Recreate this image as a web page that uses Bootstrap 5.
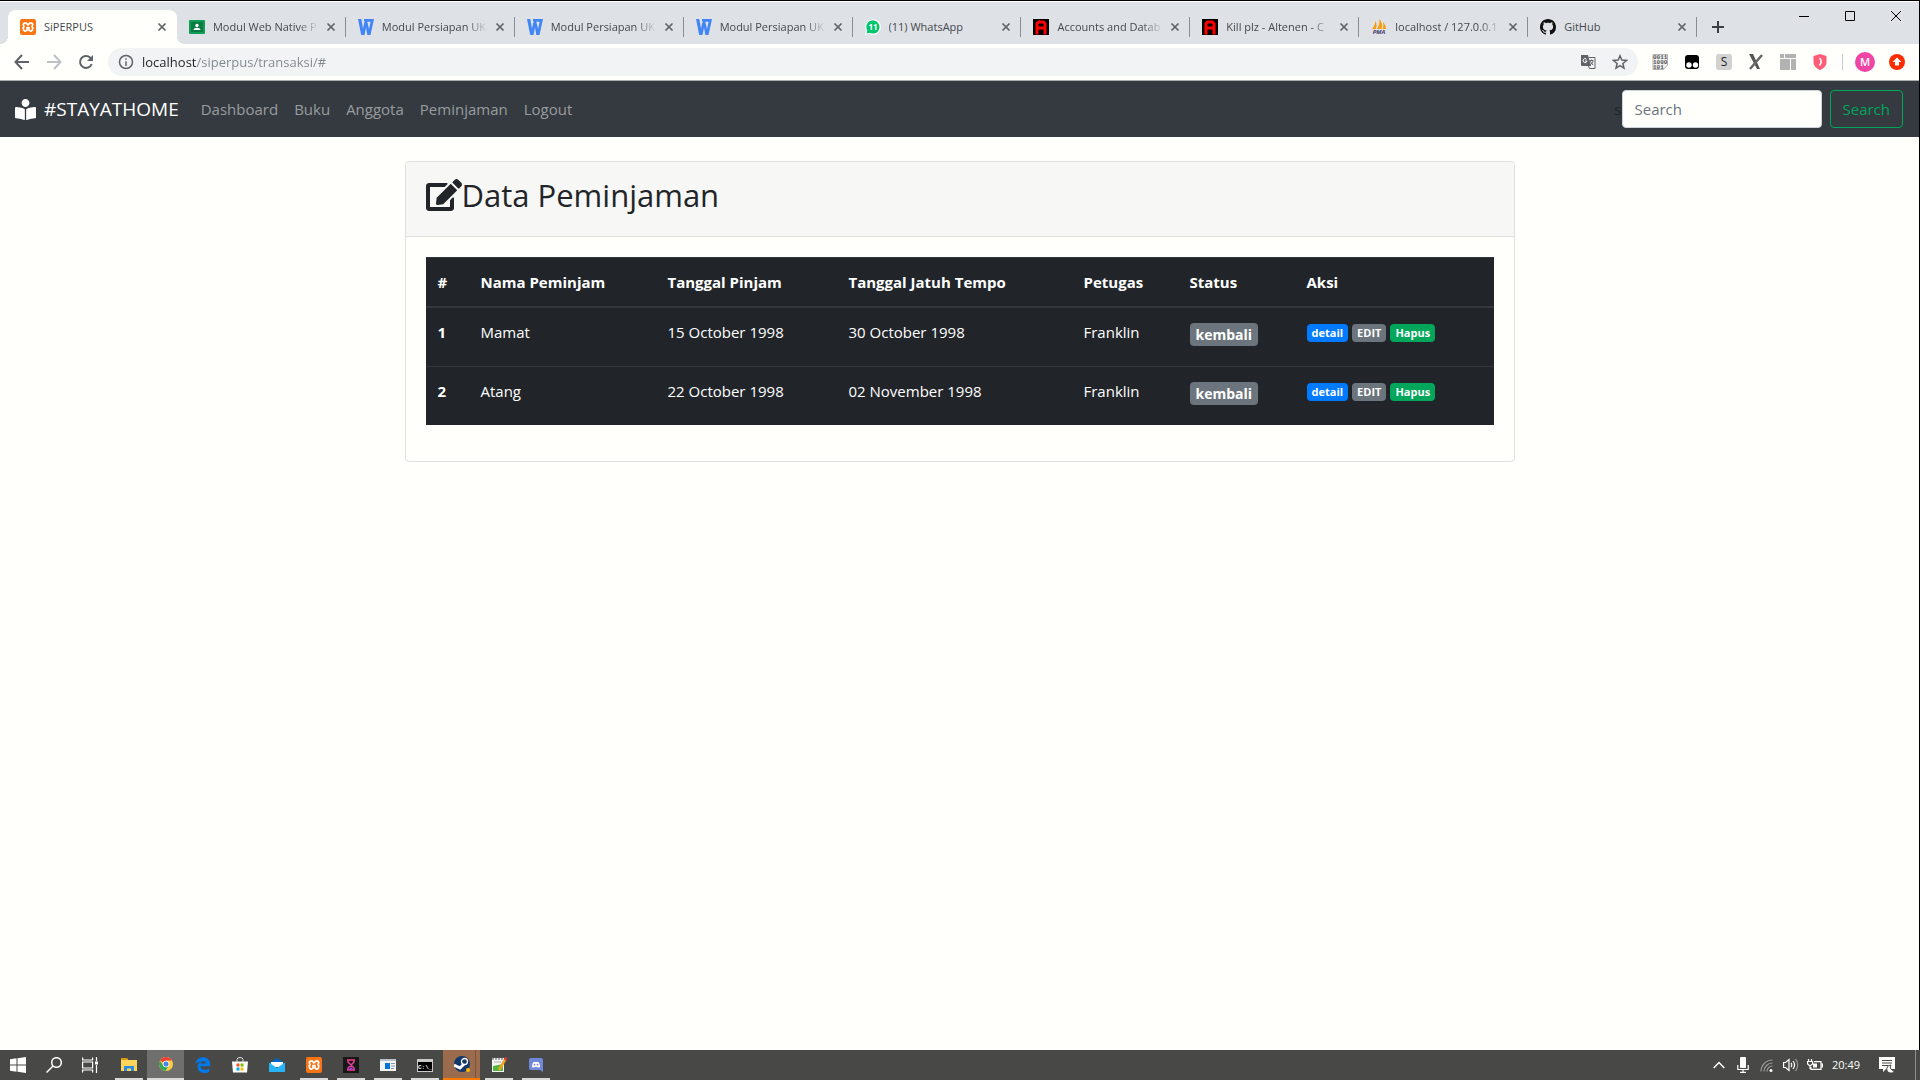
<!DOCTYPE html>
<html lang="id">
<head>
<meta charset="utf-8">
<meta name="viewport" content="width=device-width, initial-scale=1">
<title>SiPERPUS</title>
<link href="https://cdn.jsdelivr.net/npm/bootstrap@5.3.0/dist/css/bootstrap.min.css" rel="stylesheet">
<style>
:root{--paper:#fffffc}
body{font-family:"Open Sans","Noto Sans",sans-serif;font-size:15px;line-height:24px;background:var(--paper);color:#212529}
button{font-family:inherit}
svg{display:block;flex:none}
.screen{min-height:100vh}
.browser{border-top:1px solid #000;border-right:1px solid #000}
.bare{border:0;background:none;padding:0;display:flex;align-items:center;justify-content:center;color:#5f6368}

/* tab strip */
.strip{background:#dee1e6;border-top:1px solid var(--paper);height:43px;padding-left:8px}
.tabs{flex:0 1 1689px;min-width:0;margin-top:8px}
.tab{flex:1 1 0;min-width:0;height:34px;padding:0 7px 0 12px;position:relative}
.tab a{color:#45494d;font-size:11px;line-height:20px;text-decoration:none;white-space:nowrap;overflow:hidden;flex:1 1 0;margin-left:8px;margin-right:4px}
.tab .fade-out{-webkit-mask-image:linear-gradient(to right,#000 80%,transparent);mask-image:linear-gradient(to right,#000 80%,transparent)}
.tab .bare{width:16px;height:16px}
.tab + .tab::after{content:"";position:absolute;right:0;top:7px;width:1px;height:20px;background:#8a8d91}
.tab.active{background:var(--paper);border-radius:8px 8px 0 0}
.tab.active::before,.tab.active::after{content:"";position:absolute;bottom:0;width:8px;height:8px}
.tab.active::before{left:-8px;background:radial-gradient(circle at 0 0,transparent 8px,var(--paper) 8px)}
.tab.active::after{right:-8px;background:radial-gradient(circle at 100% 0,transparent 8px,var(--paper) 8px)}
.newtab{width:28px;height:28px;margin:11px 0 0 7px}
.win{width:46px;height:28px}
.win svg{stroke:#000}

/* address bar */
.toolbar{background:var(--paper);height:37px;border-bottom:1px solid #a9abad;padding:0 6px}
.toolbar > .bare{width:32px;height:28px}
.omni{background:#f1f3f4;border-radius:14px;height:28px;margin:0 6px;padding:0 2px 0 10px}
.omni .bare{width:32px;height:28px}
.omni input{border:0;outline:0;padding:0;margin-left:8px;font-size:13px;line-height:20px;color:#777b7f;-webkit-text-fill-color:transparent;background:linear-gradient(to right,#202124 55px,#80868b 55px);-webkit-background-clip:text;background-clip:text}
.toolbar .divide{width:1px;height:16px;margin:0 6px;background:#c6c8ca}

/* site navbar */
.site-nav{background:#343a40;padding:8px 16px 8px 15px;height:56px}
.site-nav .navbar-brand{font-size:19px;line-height:30px;color:#fff;margin-right:14px;padding:5px 0}
.site-nav .navbar-nav .nav-link{color:#999c9f;padding:8px}
.site-nav input{width:200px;height:38px;font-size:15px;border-color:#ced4da;background:var(--paper);border-radius:4px}
.site-nav input::placeholder{color:#6c757d}
.site-nav .btn{--bs-btn-color:#00a65a;--bs-btn-border-color:#00a65a;font-size:15px;height:38px;border-radius:4px;padding:6px 12px}
.stray{color:#212529}

/* card and table */
.sheet{max-width:1110px;margin:24px auto 0;background:var(--paper);border-color:#dfdfdf;border-radius:4px}
.sheet .card-header{background:#f7f7f5;padding:12px 20px;border-color:#dfdfdf}
.sheet h2{font-size:31px;line-height:42px;font-weight:500;margin-bottom:8px}
.sheet .card-body{padding:20px}
.loans{--bs-table-bg:#212529;--bs-table-color:#fff;table-layout:fixed;margin-bottom:16px}
.loans th,.loans td{padding:12px;vertical-align:top;border:0 solid #32383e}
.loans thead th{border-top-width:1px;border-bottom-width:2px}
.loans tbody tr{height:59px}
.loans tbody tr + tr > *{border-top-width:1px}
.c-no{width:43px}.c-nama{width:187px}.c-pinjam{width:181px}.c-tempo{width:235px}.c-petugas{width:106px}.c-status{width:117px}
.pill-lg{font-size:14px;line-height:15px;padding:4px 6px;border-radius:4px;display:inline-block;margin-top:3px}
.acts{gap:4px;padding-top:4px}
.acts .badge{font-size:11px;line-height:12px;padding:3px 5px;border-radius:4px;text-decoration:none}
.bg-blue{background:#007bff}.bg-gray{background:#6c757d}.bg-leaf{background:#00a65a}

/* taskbar */
.taskbar{background:#484846;height:30px}
.taskbar .bare{width:37px;height:30px;color:#fff}
.taskbar .sys{width:36px}
.taskbar .sys-last{margin-right:2px}
.taskbar .open{background:linear-gradient(#d9d9d9,#d9d9d9) center bottom/28px 2px no-repeat}
.taskbar .current{background:#6f6f6e;border-bottom:2px solid #d9d9d9}
.taskbar .alerting{background:linear-gradient(to right,#9a6b4c 32px,#7a5238 32px,#7a5238 33px,#9a6b4c 33px);border-bottom:2px solid #ff7800}
.taskbar .tray{width:24px}
.clock{font-size:11px;line-height:16px;color:#fff;margin-left:5px}
.peek{width:1px;background:#8f8f8e;margin-left:10px;margin-right:4px}
</style>
<script src="https://cdn.jsdelivr.net/npm/bootstrap@5.3.0/dist/js/bootstrap.bundle.min.js"></script>
</head>
<body>
<svg width="0" height="0" class="position-absolute" aria-hidden="true">
  <symbol id="x" viewBox="0 0 16 16"><path d="M4.500 4.500l7 7M11.500 4.500l-7 7" stroke="#5f6368" stroke-width="1.700"/></symbol>
  <symbol id="xampp" viewBox="0 0 16 16"><rect width="16" height="16" rx="2" fill="#f87414"/><path d="M4 4.200h2.300L8 5.800l1.700-1.600H12l.8 1.300-.8 2 .8 1.500-.5 2.200-1.500 1-1.800-.9V8.500H7v2.800l-1.800.9-1.500-1L3.200 9 4 7.500l-.8-2z" fill="none" stroke="#fff" stroke-width="1.700" stroke-linejoin="round"/></symbol>
  <symbol id="wdoc" viewBox="0 0 16 16"><path d="M0 0h3.300L5 9.500 6.700 2H6V0h10l-3.500 16H9.300L8 8.500 6.500 16H3.200zM9.300 2.800L11 10l1.600-7.200z" fill="#4285f4" fill-rule="evenodd"/></symbol>
  <symbol id="alt" viewBox="0 0 16 16"><path d="M0 0h16v16H0z"/><path d="M4 14V4.500L5.500 3h5L12 4.500V14M4 9h8M2.500 14h3M10.500 14h3" fill="none" stroke="#f00" stroke-width="3"/></symbol>
</svg>
<div class="screen d-flex flex-column">
<div class="browser flex-grow-1">
  <div class="strip d-flex align-items-start">
    <nav class="tabs d-flex" aria-label="Tab">
      <div class="tab active d-flex align-items-center"><svg width="16" height="16"><use href="#xampp"/></svg><a href="#">SiPERPUS</a><button class="bare" aria-label="Tutup"><svg width="16" height="16"><use href="#x"/></svg></button></div>
      <div class="tab d-flex align-items-center"><svg width="16" height="16" viewBox="0 0 16 16"><rect y="1" width="16" height="14" rx="1" fill="#109d58"/><rect x="2" y="3" width="12" height="10" fill="#087b43"/><circle cx="8" cy="6.500" r="1.700" fill="#fff"/><path d="M4.500 11c0-3 7-3 7 0z" fill="#fff"/></svg><a class="fade-out" href="#">Modul Web Native P</a><button class="bare" aria-label="Tutup"><svg width="16" height="16"><use href="#x"/></svg></button></div>
      <div class="tab d-flex align-items-center"><svg width="16" height="16"><use href="#wdoc"/></svg><a class="fade-out" href="#">Modul Persiapan UK</a><button class="bare" aria-label="Tutup"><svg width="16" height="16"><use href="#x"/></svg></button></div>
      <div class="tab d-flex align-items-center"><svg width="16" height="16"><use href="#wdoc"/></svg><a class="fade-out" href="#">Modul Persiapan UK</a><button class="bare" aria-label="Tutup"><svg width="16" height="16"><use href="#x"/></svg></button></div>
      <div class="tab d-flex align-items-center"><svg width="16" height="16"><use href="#wdoc"/></svg><a class="fade-out" href="#">Modul Persiapan UK</a><button class="bare" aria-label="Tutup"><svg width="16" height="16"><use href="#x"/></svg></button></div>
      <div class="tab d-flex align-items-center"><svg width="16" height="16" viewBox="0 0 16 16"><path d="M0 16l1.200-4.200A7.800 7.800 0 1 1 4 14.800z" fill="#fff"/><path d="M1.500 14.500l.8-3A6.600 6.600 0 1 1 4.600 13.700z" fill="#00c66b"/><text x="8" y="11" font-size="8" font-weight="700" text-anchor="middle" fill="#fff">11</text></svg><a href="#">(11) WhatsApp</a><button class="bare" aria-label="Tutup"><svg width="16" height="16"><use href="#x"/></svg></button></div>
      <div class="tab d-flex align-items-center"><svg width="16" height="16"><use href="#alt"/></svg><a class="fade-out" href="#">Accounts and Datab</a><button class="bare" aria-label="Tutup"><svg width="16" height="16"><use href="#x"/></svg></button></div>
      <div class="tab d-flex align-items-center"><svg width="16" height="16"><use href="#alt"/></svg><a class="fade-out" href="#">Kill plz - Altenen - C</a><button class="bare" aria-label="Tutup"><svg width="16" height="16"><use href="#x"/></svg></button></div>
      <div class="tab d-flex align-items-center"><svg width="16" height="16" viewBox="0 0 16 16"><path d="M1 10C3 8 4 5 4.500 2 6 5 5.500 8 5 10zM6 10C8 7 8.500 4 8.500 0c3 4 3 7 2 10zM11.500 10c1-2 1-4 .5-7 2.500 3 3 5 3 7z" fill="#f89c0e"/><text x="8" y="15" font-size="6" font-weight="700" font-style="italic" text-anchor="middle" fill="#4b3a6b">PMA</text></svg><a class="fade-out" href="#">localhost / 127.0.0.1</a><button class="bare" aria-label="Tutup"><svg width="16" height="16"><use href="#x"/></svg></button></div>
      <div class="tab d-flex align-items-center"><svg width="16" height="16" viewBox="0 0 16 16" fill="#111"><path d="M8 0C3.580 0 0 3.580 0 8c0 3.540 2.290 6.530 5.470 7.590.4.070.55-.17.55-.38 0-.19-.01-.82-.01-1.490-2.010.37-2.530-.49-2.690-.94-.09-.23-.48-.94-.82-1.130-.28-.15-.68-.52-.01-.53.630-.01 1.080.58 1.230.82.720 1.210 1.870.87 2.330.66.070-.52.280-.87.510-1.070-1.780-.2-3.640-.89-3.640-3.950 0-.87.310-1.590.82-2.150-.08-.2-.36-1.020.08-2.120 0 0 .67-.21 2.200.82.640-.18 1.320-.27 2-.27s1.360.09 2 .27c1.530-1.040 2.200-.82 2.200-.82.440 1.100.16 1.920.08 2.120.510.56.820 1.270.82 2.150 0 3.070-1.870 3.750-3.650 3.950.290.25.540.73.540 1.480 0 1.070-.01 1.930-.01 2.200 0 .210.150.460.550.380A8.010 8.010 0 0 0 16 8c0-4.420-3.580-8-8-8z"/></svg><a href="#">GitHub</a><button class="bare" aria-label="Tutup"><svg width="16" height="16"><use href="#x"/></svg></button></div>
    </nav>
    <button class="bare newtab" aria-label="Tab baru"><svg width="12" height="12" stroke="#3c4043" stroke-width="2"><path d="M6 0v12M0 6h12"/></svg></button>
    <div class="d-flex ms-auto">
      <button class="bare win" aria-label="Minimalkan"><svg width="10" height="10"><path d="M0 5.500h10"/></svg></button>
      <button class="bare win" aria-label="Maksimalkan"><svg width="10" height="10" fill="none"><path d="M.5.5h9v9h-9z"/></svg></button>
      <button class="bare win" aria-label="Tutup jendela"><svg width="10" height="10"><path d="M0 0l10 10M10 0L0 10"/></svg></button>
    </div>
  </div>

  <div class="toolbar d-flex align-items-center">
    <button class="bare" aria-label="Kembali"><svg width="16" height="16" fill="none" stroke="#5f6368" stroke-width="2"><path d="M15 8H2M8 1L1.500 8 8 15"/></svg></button>
    <button class="bare" aria-label="Maju"><svg width="16" height="16" fill="none" stroke="#bdc1c6" stroke-width="2"><path d="M1 8h13M8 1l6.500 7L8 15"/></svg></button>
    <button class="bare" aria-label="Muat ulang"><svg width="16" height="16" fill="none" stroke="#5f6368" stroke-width="2"><path d="M13.700 10A6 6 0 1 1 12.300 3.700L14 5.500"/><path d="M15 1v6H9z" fill="#5f6368" stroke="none"/></svg></button>
    <div class="omni d-flex align-items-center flex-grow-1">
      <svg width="16" height="16" fill="none" stroke="#5f6368" stroke-width="1.500"><circle cx="8" cy="8" r="6.500"/><path d="M8 7.200V12M8 4.200v1.600"/></svg>
      <input class="flex-grow-1" type="text" aria-label="Alamat" value="localhost/siperpus/transaksi/#">
      <button class="bare" aria-label="Terjemahkan"><svg width="16" height="16" viewBox="0 0 16 16"><path d="M1 1h7l3 11H2a1 1 0 0 1-1-1z" fill="#5f6368"/><path d="M8.500 3.500H15v11H9.500L8.500 12" fill="none" stroke="#5f6368"/><path d="M6.500 5.200A2 2 0 1 0 7 7H5" fill="none" stroke="#fff"/><path d="M9.500 6.500h4M11.500 5.500v1M10 7l3 4M13 7c-.5 2-1.500 3-3 4" fill="none" stroke="#5f6368"/></svg></button>
      <button class="bare" aria-label="Markah"><svg width="16" height="16" fill="none" stroke="#5f6368" stroke-width="1.500"><path d="M8 1.800l1.800 4.300 4.700.4-3.600 3 1.100 4.600L8 11.700l-4 2.400 1.100-4.600-3.600-3 4.700-.4z"/></svg></button>
    </div>
    <button class="bare" aria-label="Biner"><svg width="16" height="16" viewBox="0 0 16 16"><path d="M1 .5h14.500V11l-4 4.500H1z" fill="#eee" stroke="#b5b5b5"/><g font-family="Liberation Mono" font-size="6" font-weight="700" fill="#555"><text x="1" y="5">0011</text><text x="1" y="10">1000</text><text x="1" y="15">101</text></g></svg></button>
    <button class="bare" aria-label="Ekstensi"><svg width="14" height="14"><rect width="14" height="14" rx="3"/><circle cx="4" cy="10" r="2.700" fill="#fff"/><circle cx="10.500" cy="10" r="2.700" fill="#fff"/></svg></button>
    <button class="bare" aria-label="Ekstensi S"><svg width="16" height="16"><rect width="16" height="16" rx="3" fill="#d2d2d2"/><text x="8" y="12" font-size="12" text-anchor="middle" fill="#222">S</text></svg></button>
    <button class="bare" aria-label="Ekstensi X"><svg width="14" height="16"><path d="M0 0h4l7 15H8z" fill="#555"/><path d="M13 1L1 15" stroke="#666" stroke-width="2.500"/></svg></button>
    <button class="bare" aria-label="Ekstensi tata letak"><svg width="16" height="16" fill="#b2b2b2"><path d="M0 0h4v4H0zM5 0h11v4H5zM0 5h10v11H0zM11 5h5v11h-5z"/></svg></button>
    <button class="bare" aria-label="Perisai"><svg width="14" height="16"><path d="M7 0l6.500 2v6c0 4-3 6.500-6.500 8C3.500 14.500.5 12 .5 8V2z" fill="#ff5c75"/><path d="M6.500 4c2 2 2 5 0 7.500" fill="none" stroke="#fff" stroke-width="1.500"/></svg></button>
    <span class="divide"></span>
    <button class="bare" aria-label="Profil"><svg width="20" height="20"><circle cx="10" cy="10" r="10" fill="#f045a5"/><text x="10" y="14" font-size="11" font-weight="600" text-anchor="middle" fill="#fff">M</text></svg></button>
    <button class="bare" aria-label="Pembaruan"><svg width="16" height="16"><circle cx="8" cy="8" r="8" fill="#ff2c00"/><path d="M8 3.500l4.500 4.500H10v3.500H6V8H3.500z" fill="#fff"/></svg></button>
  </div>

  <nav class="site-nav navbar-expand d-flex align-items-center">
    <a class="navbar-brand d-flex align-items-center gap-2" href="#"><svg width="21" height="21" viewBox="0 0 512 512" fill="#fff"><path d="M352 96c0-53.020-42.980-96-96-96s-96 42.980-96 96 42.980 96 96 96 96-42.980 96-96zM233.590 241.100c-59.330-36.320-155.430-46.300-203.790-49.050C13.550 191.130 0 203.510 0 219.140v222.800c0 14.330 11.590 26.280 26.490 27.050 43.660 2.290 131.990 10.680 193.040 41.430 9.370 4.720 20.480-1.710 20.480-11.870V252.560c-.01-4.670-2.320-8.950-6.420-11.460zm248.610-49.050c-48.350 2.740-144.460 12.730-203.780 49.050-4.100 2.510-6.410 6.960-6.410 11.630v245.790c0 10.190 11.140 16.630 20.540 11.900 61.040-30.720 149.320-39.110 192.970-41.400 14.900-.78 26.490-12.730 26.490-27.060V219.140c-.01-15.630-13.560-28.010-29.810-27.090z"/></svg>#STAYATHOME</a>
    <ul class="navbar-nav me-auto">
      <li class="nav-item"><a class="nav-link" href="#">Dashboard</a></li>
      <li class="nav-item"><a class="nav-link" href="#">Buku</a></li>
      <li class="nav-item"><a class="nav-link" href="#">Anggota</a></li>
      <li class="nav-item"><a class="nav-link" href="#">Peminjaman</a></li>
      <li class="nav-item"><a class="nav-link" href="#">Logout</a></li>
    </ul>
    <form class="d-flex align-items-center">
      <span class="stray">s</span>
      <input class="form-control me-2" type="search" placeholder="Search" aria-label="Search">
      <button class="btn btn-outline-success" type="button">Search</button>
    </form>
  </nav>

  <main class="card sheet">
    <div class="card-header"><h2 class="d-flex align-items-center"><svg width="36" height="32" viewBox="0 0 576 512" fill="#212529"><path d="M402.600 83.200l90.200 90.200c3.800 3.800 3.800 10 0 13.800L274.400 405.600l-92.800 10.300c-12.400 1.400-22.900-9.100-21.500-21.500l10.300-92.800L388.800 83.200c3.800-3.800 10-3.800 13.800 0zm162-22.900l-48.800-48.800c-15.200-15.200-39.900-15.200-55.200 0l-35.400 35.400c-3.800 3.800-3.800 10 0 13.800l90.200 90.200c3.800 3.800 10 3.800 13.800 0l35.400-35.400c15.200-15.300 15.200-40 0-55.200zM384 346.200V448H64V128h229.800c3.200 0 6.200-1.300 8.500-3.500l40-40c7.600-7.600 2.200-20.500-8.500-20.500H48C21.500 64 0 85.500 0 112v352c0 26.500 21.500 48 48 48h352c26.500 0 48-21.500 48-48V306.200c0-10.700-12.900-16-20.500-8.500l-40 40c-2.200 2.300-3.500 5.300-3.500 8.500z"/></svg>Data Peminjaman</h2></div>
    <div class="card-body">
      <table class="table loans">
        <thead><tr><th class="c-no" scope="col">#</th><th class="c-nama" scope="col">Nama Peminjam</th><th class="c-pinjam" scope="col">Tanggal Pinjam</th><th class="c-tempo" scope="col">Tanggal Jatuh Tempo</th><th class="c-petugas" scope="col">Petugas</th><th class="c-status" scope="col">Status</th><th scope="col">Aksi</th></tr></thead>
        <tbody>
          <tr><th scope="row">1</th><td>Mamat</td><td>15 October 1998</td><td>30 October 1998</td><td>Franklin</td><td><span class="badge bg-gray pill-lg">kembali</span></td><td><div class="d-flex acts"><a class="badge bg-blue" href="#">detail</a><a class="badge bg-gray" href="#">EDIT</a><a class="badge bg-leaf" href="#">Hapus</a></div></td></tr>
          <tr><th scope="row">2</th><td>Atang</td><td>22 October 1998</td><td>02 November 1998</td><td>Franklin</td><td><span class="badge bg-gray pill-lg">kembali</span></td><td><div class="d-flex acts"><a class="badge bg-blue" href="#">detail</a><a class="badge bg-gray" href="#">EDIT</a><a class="badge bg-leaf" href="#">Hapus</a></div></td></tr>
        </tbody>
      </table>
    </div>
  </main>
</div>

<footer class="taskbar d-flex">
  <button class="bare sys" aria-label="Start"><svg width="16" height="16" fill="#fff"><path d="M0 2.200L6.500 1.300V7.500H0zM7.500 1.200L16 0v7.500H7.500zM0 8.500h6.500v6.200L0 13.800zM7.500 8.500H16V16l-8.500-1.200z"/></svg></button>
  <button class="bare sys" aria-label="Cari"><svg width="16" height="16" fill="none" stroke="#fff" stroke-width="1.500"><circle cx="10.500" cy="5.500" r="4.800"/><path d="M7 9L.5 15.500"/></svg></button>
  <button class="bare sys sys-last" aria-label="Tampilan tugas"><svg width="16" height="16" fill="none" stroke="#fff" stroke-width="1.200"><path d="M.6.5V3h10V.5M.6 5h10v6h-10zM.6 15.500V13h10v2.500M14.500 0v4M14.500 8v8"/><path d="M13 4.500h3v3h-3z" fill="#fff" stroke="none"/></svg></button>
  <button class="bare open" aria-label="File Explorer"><svg width="16" height="16"><path d="M0 1h6l1 2h9v11H0z" fill="#ffd45a"/><path d="M0 1h6l1 2H0z" fill="#d99a0b"/><path d="M3 14V9h10v5h-3v-2.500H6V14z" fill="#2b8be0"/></svg></button>
  <button class="bare current" aria-label="Chrome"><svg width="14" height="14" viewBox="0 0 14 14"><circle cx="7" cy="7" r="7" fill="#ffcd40"/><path d="M7 7L1 3.500A7 7 0 0 1 13 3.500H7z" fill="#ea4335"/><path d="M1 3.500A7 7 0 0 0 6.500 14L9.500 9 4 8.500z" fill="#34a853"/><circle cx="7" cy="7" r="3.200" fill="#fff"/><circle cx="7" cy="7" r="2.500" fill="#4285f4"/></svg></button>
  <button class="bare" aria-label="Edge"><svg width="16" height="16"><path d="M.5 7C1 2.500 4 .2 8 .2c4.500 0 7.200 3 7.200 7v2H5.500c.2 4 5.500 4.300 8.700 2.200V15C9 17.500 2.500 15.500 2.500 10c0-2.500 1.300-4.300 3.300-5.200C4 4.800 1.700 5.600.5 7zm5.200-.6h4.900c0-3.400-4.300-3-4.900 0z" fill="#0078e7"/></svg></button>
  <button class="bare" aria-label="Store"><svg width="16" height="16"><path d="M5 4.500V2.500a3 2 0 0 1 6 0v2" fill="none" stroke="#ddd"/><path d="M0 4.500h16l-1 11H1z" fill="#fff"/><path d="M4.500 6.500H7.500v3H4.500z" fill="#f25022"/><path d="M8.500 6.500h3v3h-3z" fill="#7fba00"/><path d="M4.500 10.500h3v3h-3z" fill="#00a4ef"/><path d="M8.500 10.500h3v3h-3z" fill="#ffb900"/></svg></button>
  <button class="bare" aria-label="Mail"><svg width="16" height="16"><path d="M0 6l8-5 8 5v9H0z" fill="#0067c0"/><path d="M2 5h12v5H2z" fill="#fff"/><path d="M0 5.500l8 5.500 8-5.500V15H0z" fill="#28b4f4"/></svg></button>
  <button class="bare open" aria-label="XAMPP"><svg width="16" height="16"><use href="#xampp"/></svg></button>
  <button class="bare open" aria-label="Jam pasir"><svg width="16" height="16"><path d="M0 0h16v16H0z" fill="#171717"/><path d="M4 3h8M4 13h8" stroke="#ff3d7f" stroke-width="1.500"/><path d="M5 3v2l6 6v2M11 3v2l-6 6v2" fill="none" stroke="#e2419b" stroke-width="1.500"/><path d="M5 13l3-3 3 3z" fill="#a63fd0"/></svg></button>
  <button class="bare open" aria-label="Aplikasi"><svg width="16" height="12"><path d="M0 0h16v12H0z" fill="#f4f4f4"/><path d="M0 0h16v2H0z" fill="#b9c3cc"/><path d="M5 4h5v6H5z" fill="#0074d9"/><path d="M11 4.500h4M11 7h4M11 9.500h3" stroke="#8b98a5"/></svg></button>
  <button class="bare open" aria-label="Command Prompt"><svg width="16" height="13"><path d="M0 0h16v13H0z" fill="#c9c9c9"/><path d="M1 3h14v9H1z" fill="#000"/><text x="1" y="10" font-family="Liberation Mono" font-size="6" font-weight="700" fill="#fff">C:\_</text></svg></button>
  <button class="bare alerting" aria-label="Steam"><svg width="16" height="16"><circle cx="8" cy="8" r="8" fill="#12386b"/><path d="M0 9l6 3 5-5" fill="none" stroke="#fff" stroke-width="3"/><circle cx="10.500" cy="5.500" r="3" fill="#12386b" stroke="#fff" stroke-width="1.300"/><circle cx="14" cy="14" r="2" fill="#ffb900"/></svg></button>
  <button class="bare open" aria-label="Notepad++"><svg width="16" height="16"><path d="M1 1h12v14H1z" fill="#f5f5f5"/><path d="M2 9l10-2v7H2z" fill="#55b83c"/><path d="M3 5h7" stroke="#aaa"/><path d="M2 0v3M5 0v3M8 0v3M11 0v3" stroke="#555"/><path d="M14.500 2L8 13" stroke="#f0a325" stroke-width="2.500"/><path d="M15.500 .5l-1.500 2.500" stroke="#d33" stroke-width="2.500"/></svg></button>
  <button class="bare open" aria-label="Discord"><svg width="14" height="14"><path d="M2 0h10a2 2 0 0 1 2 2v12l-3-2H2a2 2 0 0 1-2-2V2a2 2 0 0 1 2-2z" fill="#7289da"/><path d="M3 9c0-3 1-5 2-5h4c1 0 2 2 2 5l-2 .8L8.300 9H5.700L5 9.800z" fill="#fff"/><circle cx="5.500" cy="6.700" r=".9" fill="#7289da"/><circle cx="8.500" cy="6.700" r=".9" fill="#7289da"/></svg></button>
  <button class="bare tray ms-auto" aria-label="Ikon tersembunyi"><svg width="12" height="8" fill="none" stroke="#fff" stroke-width="1.500"><path d="M.7 7L6 1.500 11.300 7"/></svg></button>
  <button class="bare tray" aria-label="Mikrofon"><svg width="12" height="16"><rect x="3" width="6" height="11" rx="1" fill="#fff"/><path d="M.8 8v4.500h10.400V8M6 12.500V15M3 15.300h6" fill="none" stroke="#fff" stroke-width="1.200"/></svg></button>
  <button class="bare tray" aria-label="Jaringan"><svg width="13" height="13" fill="none" stroke="#9b9b9a" stroke-width="1.200"><path d="M1 12.500A11.500 11.500 0 0 1 12.500 1M4 12.500A8.500 8.500 0 0 1 12.500 4M7 12.500A5.500 5.500 0 0 1 12.500 7"/><circle cx="11" cy="11.500" r="1.500" fill="#fff" stroke="none"/></svg></button>
  <button class="bare tray" aria-label="Volume"><svg width="16" height="14" fill="none" stroke="#fff" stroke-width="1.200"><path d="M.6 4.500h2L6 1.500v11l-3.400-3h-2zM8 5c1 1 1 3 0 4M10 3c2 2.500 2 5.500 0 8"/><path d="M12.500 1c3 3.500 3 8.500 0 12" stroke="#999"/></svg></button>
  <button class="bare tray" aria-label="Baterai"><svg width="16" height="12" fill="none" stroke="#fff" stroke-width="1.200"><path d="M7 2.600h7v7.800H4V8M14 5h1.500v3H14M1.500 0v2M4.500 0v2M.6 2.500h5V5L3 7 .6 5zM3 7v3"/><path d="M6 4.500h4v4H6z" fill="#fff" stroke="none"/></svg></button>
  <time class="clock align-self-center">20:49</time>
  <button class="bare ms-2" aria-label="Notifikasi"><svg width="16" height="16"><path d="M0 0h16v12H7l-3 3v-3H0z" fill="#fff"/><path d="M3 3.500h10M3 6h10M3 8.500h6" stroke="#484846" stroke-width="1.200"/><path d="M12 8a4 4 0 1 0 3.500 5.500A3.500 3.500 0 0 1 12 8z" fill="#fff" stroke="#484846"/></svg></button>
  <span class="peek"></span>
</footer>
</div>
</body>
</html>
